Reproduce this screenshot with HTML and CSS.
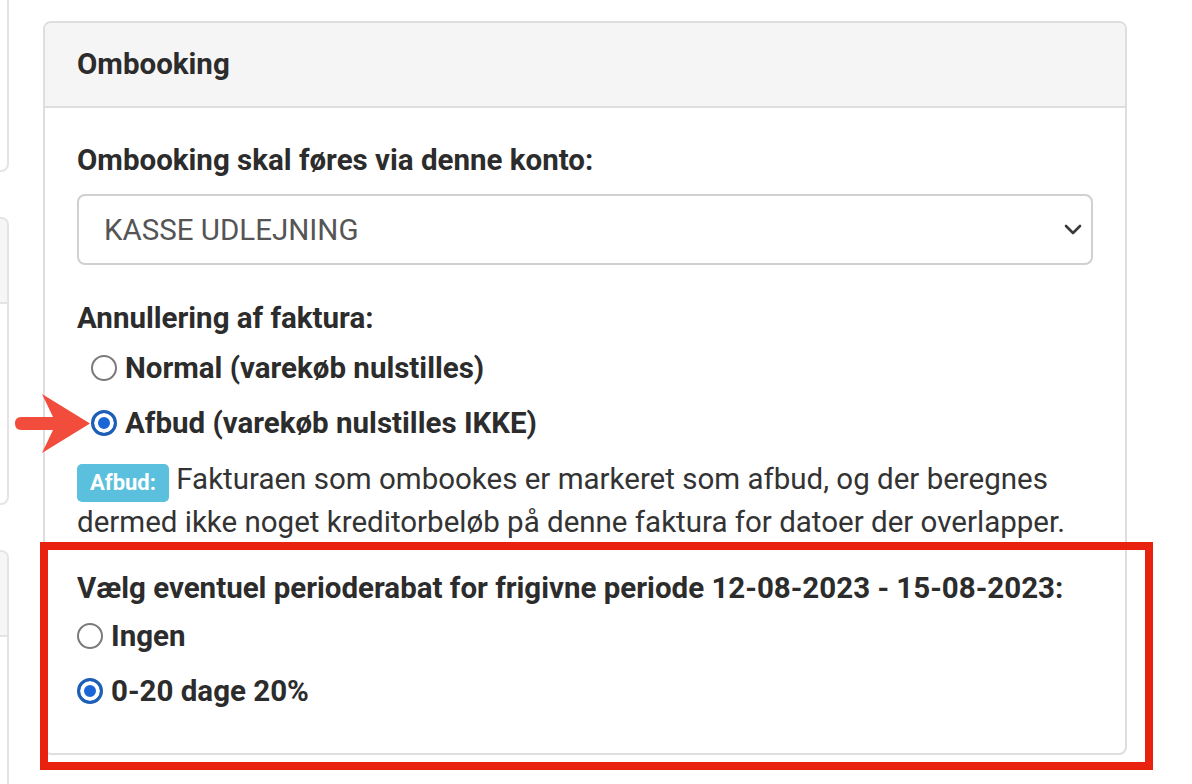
FILE: index.html
```html
<!DOCTYPE html>
<html lang="da">
<head>
<meta charset="utf-8">
<title>Ombooking</title>
<link rel="stylesheet" href="styles.css">
</head>
<body>
<div class="page">
  <aside class="side">
    <div class="side-card c1"></div>
    <div class="side-card c2"><div class="side-head"></div></div>
    <div class="side-card c3"><div class="side-head"></div></div>
  </aside>

  <main class="main">
    <section class="card">
      <header class="card-head">Ombooking</header>
      <div class="card-body">
        <div class="field account">
          <div class="lbl">Ombooking skal føres via denne konto:</div>
          <div class="select">
            <span>KASSE UDLEJNING</span>
            <svg class="chev" width="18" height="12" viewBox="0 0 18 12"><polyline points="2,2 9,9 16,2" fill="none" stroke="#3a3a3a" stroke-width="2.6" stroke-linecap="round" stroke-linejoin="round"/></svg>
          </div>
        </div>

        <div class="field cancel">
          <div class="lbl">Annullering af faktura:</div>
          <div class="radios indent">
            <label class="radio"><span class="rb"></span>Normal (varekøb nulstilles)</label>
            <label class="radio"><span class="rb on"></span>Afbud (varekøb nulstilles IKKE)</label>
          </div>
          <p class="note"><span class="badge">Afbud:</span> <span class="line">Fakturaen som ombookes er markeret som afbud, og der beregnes</span> <span class="line">dermed ikke noget kreditorbeløb på denne faktura for datoer der overlapper.</span></p>
        </div>

        <div class="field discount">
          <div class="lbl">Vælg eventuel perioderabat for frigivne periode 12-08-2023 - 15-08-2023:</div>
          <div class="radios">
            <label class="radio"><span class="rb"></span>Ingen</label>
            <label class="radio"><span class="rb on"></span>0-20 dage 20%</label>
          </div>
        </div>
      </div>
    </section>
  </main>

  <div class="redbox"></div>
  <svg class="arrow" width="84" height="64" viewBox="0 0 84 64">
    <path d="M9 26 L41 26 L30 3 L78 32.5 L30 62 L41 39 L9 39 Q3 39 3 32.5 Q3 26 9 26 Z" fill="#f24d3c"/>
  </svg>
</div>
</body>
</html>
```

FILE: styles.css
```css
* { box-sizing: border-box; }

html, body {
  margin: 0;
  background: #ffffff;
}

body {
  font-family: Roboto, "Liberation Sans", Arial, sans-serif;
  font-size: 29.5px;
  line-height: 40px;
  color: #2c2c2c;
}

.page {
  position: relative;
  display: flex;
  gap: 34px;
  height: 784px;
  overflow: hidden;
}

/* partial cards of the neighbouring column */
.side {
  flex: none;
  width: 9px;
  display: flex;
  flex-direction: column;
  gap: 45px;
  margin-top: -20px;
}

.side-card {
  flex: none;
  border: 2px solid #e4e4e4;
  border-left: none;
  border-radius: 0 8px 8px 0;
  overflow: hidden;
}

.c1 { height: 192px; }
.c2 { height: 288px; }
.c3 { height: 320px; }

.side-head {
  height: 85px;
  background: #f6f6f6;
  border-bottom: 2px solid #e4e4e4;
}

/* main card */
.main {
  flex: none;
  width: 1084px;
  padding-top: 21px;
}

.card {
  border: 2px solid #dedede;
  border-radius: 8px;
  overflow: hidden;
  background: #fff;
}

.card-head {
  background: #f5f5f5;
  border-bottom: 2px solid #dedede;
  padding: 21px 32px 22px;
  font-weight: 700;
}

.card-body {
  padding: 32px 32px 42px;
}

.lbl {
  font-weight: 700;
}

.account .lbl {
  margin-bottom: 14px;
}

.select {
  height: 71px;
  border: 2px solid #d0d0d0;
  border-radius: 8px;
  display: flex;
  align-items: center;
  justify-content: space-between;
  padding: 0 9px 0 25px;
  color: #555;
  background: #fff;
}

.chev { display: block; }

.cancel {
  margin-top: 33px;
}

.radios {
  display: flex;
  flex-direction: column;
  gap: 15px;
  margin-top: 10px;
}

.indent {
  padding-left: 14px;
}

.radio {
  display: flex;
  align-items: center;
  gap: 8px;
  font-weight: 700;
}

.rb {
  flex: none;
  width: 26px;
  height: 26px;
  border-radius: 50%;
  border: 2px solid #7a7a7a;
  background: #fff;
}

.rb.on {
  border: 3px solid #1c5fb4;
  background: #1a66d6;
  box-shadow: inset 0 0 0 4px #fff;
}

.note {
  margin: 16px 0 0;
  color: #333;
}

.badge {
  display: inline-block;
  background: #5bc0de;
  color: #fff;
  font-weight: 700;
  font-size: 22px;
  line-height: 22px;
  padding: 8px 13px 8px;
  border-radius: 5px;
  vertical-align: -1px;
}

.discount {
  margin-top: 26px;
}

.discount .radios {
  margin-top: 8px;
}

/* annotations */
.redbox {
  position: absolute;
  left: 40px;
  top: 542px;
  width: 1113px;
  height: 228px;
  border: 8px solid #e8220e;
  pointer-events: none;
}

.arrow {
  position: absolute;
  left: 12px;
  top: 391px;
}
```
